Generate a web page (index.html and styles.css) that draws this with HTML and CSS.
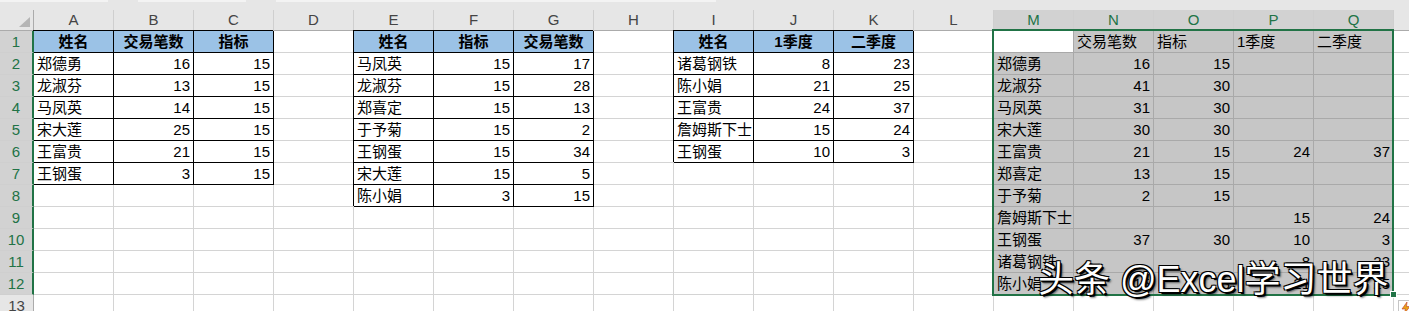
FILE: index.html
```html
<!DOCTYPE html>
<html lang="zh-CN">

<head>
    <meta charset="UTF-8">
    <meta name="viewport" content="width=device-width, initial-scale=1.0">
    <title>工作表</title>
    <link rel="stylesheet" href="styles.css">
</head>

<body>
    <div class="topbar">
        <div class="tb-seg"></div>
        <div class="tb-seg"></div>
        <div class="tb-seg wide"></div>
    </div>

    <div class="book">
        <div class="sheet" id="sheet"></div>
        <div class="watermark">头条 @Excel学习世界</div>
        <div class="quick-btn">
            <svg width="12" height="12" viewBox="0 0 12 12">
                <path d="M7 0 L2 7 H5.5 L4 12 L10 4.5 H6.5 Z" fill="#e8a317" stroke="#c0392b" stroke-width="0.6"/>
            </svg>
        </div>
    </div>

    <script>
        // Column letters shown in the sheet
        const colNames = 'ABCDEFGHIJKLMNOPQR'.split('');
        const rowCount = 13;

        // Current selection M1:Q12
        const sel = { c1: 12, c2: 16, r1: 1, r2: 12 };

        const cells = {};

        // Put a block of values starting at (col, row)
        function putBlock(col, row, data, boxed) {
            data.forEach((line, i) => {
                line.forEach((v, j) => {
                    const classes = [];
                    if (boxed) classes.push('boxed');
                    if (boxed && i === 0) classes.push('head');
                    if (typeof v === 'number') classes.push('num');
                    cells[colNames[col + j] + (row + i)] = { v: v === null ? '' : v, classes };
                });
            });
        }

        putBlock(0, 1, [
            ['姓名', '交易笔数', '指标'],
            ['郑德勇', 16, 15],
            ['龙淑芬', 13, 15],
            ['马凤英', 14, 15],
            ['宋大莲', 25, 15],
            ['王富贵', 21, 15],
            ['王钢蛋', 3, 15]
        ], true);

        putBlock(4, 1, [
            ['姓名', '指标', '交易笔数'],
            ['马凤英', 15, 17],
            ['龙淑芬', 15, 28],
            ['郑喜定', 15, 13],
            ['于予菊', 15, 2],
            ['王钢蛋', 15, 34],
            ['宋大莲', 15, 5],
            ['陈小娟', 3, 15]
        ], true);

        putBlock(8, 1, [
            ['姓名', '1季度', '二季度'],
            ['诸葛钢铁', 8, 23],
            ['陈小娟', 21, 25],
            ['王富贵', 24, 37],
            ['詹姆斯下士', 15, 24],
            ['王钢蛋', 10, 3]
        ], true);

        // Merged result
        putBlock(12, 1, [
            [null, '交易笔数', '指标', '1季度', '二季度'],
            ['郑德勇', 16, 15, null, null],
            ['龙淑芬', 41, 30, null, null],
            ['马凤英', 31, 30, null, null],
            ['宋大莲', 30, 30, null, null],
            ['王富贵', 21, 15, 24, 37],
            ['郑喜定', 13, 15, null, null],
            ['于予菊', 2, 15, null, null],
            ['詹姆斯下士', null, null, 15, 24],
            ['王钢蛋', 37, 30, 10, 3],
            ['诸葛钢铁', null, null, 8, 23],
            ['陈小娟', 15, 3, 21, 25]
        ], false);

        const sheet = document.getElementById('sheet');

        function add(cls, text) {
            const el = document.createElement('div');
            el.className = cls;
            el.textContent = text === undefined ? '' : text;
            sheet.appendChild(el);
            return el;
        }

        const inCols = c => c >= sel.c1 && c <= sel.c2;
        const inRows = r => r >= sel.r1 && r <= sel.r2;

        // Header row
        const corner = add('corner');
        corner.innerHTML = '<svg width="33" height="20" viewBox="0 0 33 20"><polygon points="30,7 30,17 19,17" fill="#b5b5b5"/></svg>';
        colNames.forEach((n, c) => add('colhead' + (inCols(c) ? ' on' : ''), n));

        // Body rows
        for (let r = 1; r <= rowCount; r++) {
            add('rowhead' + (inRows(r) ? ' on' : ''), r);
            colNames.forEach((n, c) => {
                const cell = cells[n + r] || { v: '', classes: [] };
                const cls = ['cell'].concat(cell.classes);
                if (inCols(c) && inRows(r)) {
                    cls.push(c === sel.c1 && r === sel.r1 ? 'active' : 'sel');
                }
                add(cls.join(' '), cell.v);
            });
        }

        // Selection frame with fill handle
        const frame = add('selection');
        const handle = document.createElement('div');
        handle.className = 'handle';
        frame.appendChild(handle);
    </script>
</body>

</html>
```

FILE: styles.css
```css
body {
    margin: 0;
    overflow: hidden;
    background-color: #fff;
    font-family: "Liberation Sans", "Noto Sans CJK SC", sans-serif;
    font-size: 15px;
    color: #000;
}

.topbar {
    height: 10px;
    background-color: #e6e6e6;
    display: flex;
    gap: 30px;
}

.tb-seg {
    width: 108px;
    height: 2px;
    background-color: #f3f3f3;
}

.tb-seg.wide {
    width: 440px;
}

.book {
    position: relative;
}

.sheet {
    position: relative;
    display: grid;
    grid-template-columns: 34px repeat(18, 80px);
    grid-template-rows: 21px repeat(13, 22px);
}

.sheet > div {
    box-sizing: border-box;
}

.corner,
.colhead,
.rowhead {
    background-color: #e6e6e6;
    color: #444;
    text-align: center;
}

.corner {
    border-right: 1px solid #ababab;
    border-bottom: 1px solid #ababab;
}

.corner svg {
    display: block;
}

.colhead {
    line-height: 20px;
    border-right: 1px solid #cfcfcf;
    border-bottom: 1px solid #ababab;
}

.colhead.on {
    background-color: #d2d2d2;
    color: #217346;
    border-bottom: 2px solid #217346;
    line-height: 19px;
}

.rowhead {
    line-height: 21px;
    border-right: 1px solid #ababab;
    border-bottom: 1px solid #cfcfcf;
}

.rowhead.on {
    background-color: #d2d2d2;
    color: #217346;
    border-right: 2px solid #217346;
    position: relative;
    z-index: 1;
}

.cell {
    line-height: 21px;
    padding: 0 3px;
    white-space: nowrap;
    overflow: hidden;
    border-right: 1px solid #d4d4d4;
    border-bottom: 1px solid #d4d4d4;
}

.num {
    text-align: right;
}

.boxed {
    border-color: #000;
    box-shadow: -1px -1px 0 #000;
}

.head {
    background-color: #9bc2e6;
    font-weight: bold;
    text-align: center;
}

.sel {
    background-color: #c6c6c6;
    border-color: #a9a9a9;
}

.active {
    border-color: #a9a9a9;
}

/* frame over the selected range; the grid area is its containing block */
.selection {
    position: absolute;
    grid-column: 14 / 19;
    grid-row: 2 / 14;
    top: -2px;
    left: -2px;
    right: 0;
    bottom: -1px;
    border: 2px solid #217346;
    z-index: 2;
}

.handle {
    position: absolute;
    right: -5px;
    bottom: -4px;
    width: 5px;
    height: 5px;
    background-color: #217346;
    border: 1px solid #fff;
}

.watermark {
    position: absolute;
    left: 1038px;
    top: 252px;
    z-index: 3;
    font-size: 36px;
    line-height: 1;
    color: #fff;
    white-space: nowrap;
    text-shadow: 1px 1px 0 #000, 2px 2px 0 #000, -1px -1px 0 #000, 1px -1px 0 #000, -1px 1px 0 #000, 3px 3px 2px rgba(0, 0, 0, 0.5);
}

.quick-btn {
    position: absolute;
    left: 1398px;
    top: 290px;
    width: 16px;
    height: 16px;
    box-sizing: border-box;
    border: 1px solid #c6c6c6;
    background-color: #fff;
    display: flex;
    align-items: center;
    justify-content: center;
    z-index: 3;
}
```
